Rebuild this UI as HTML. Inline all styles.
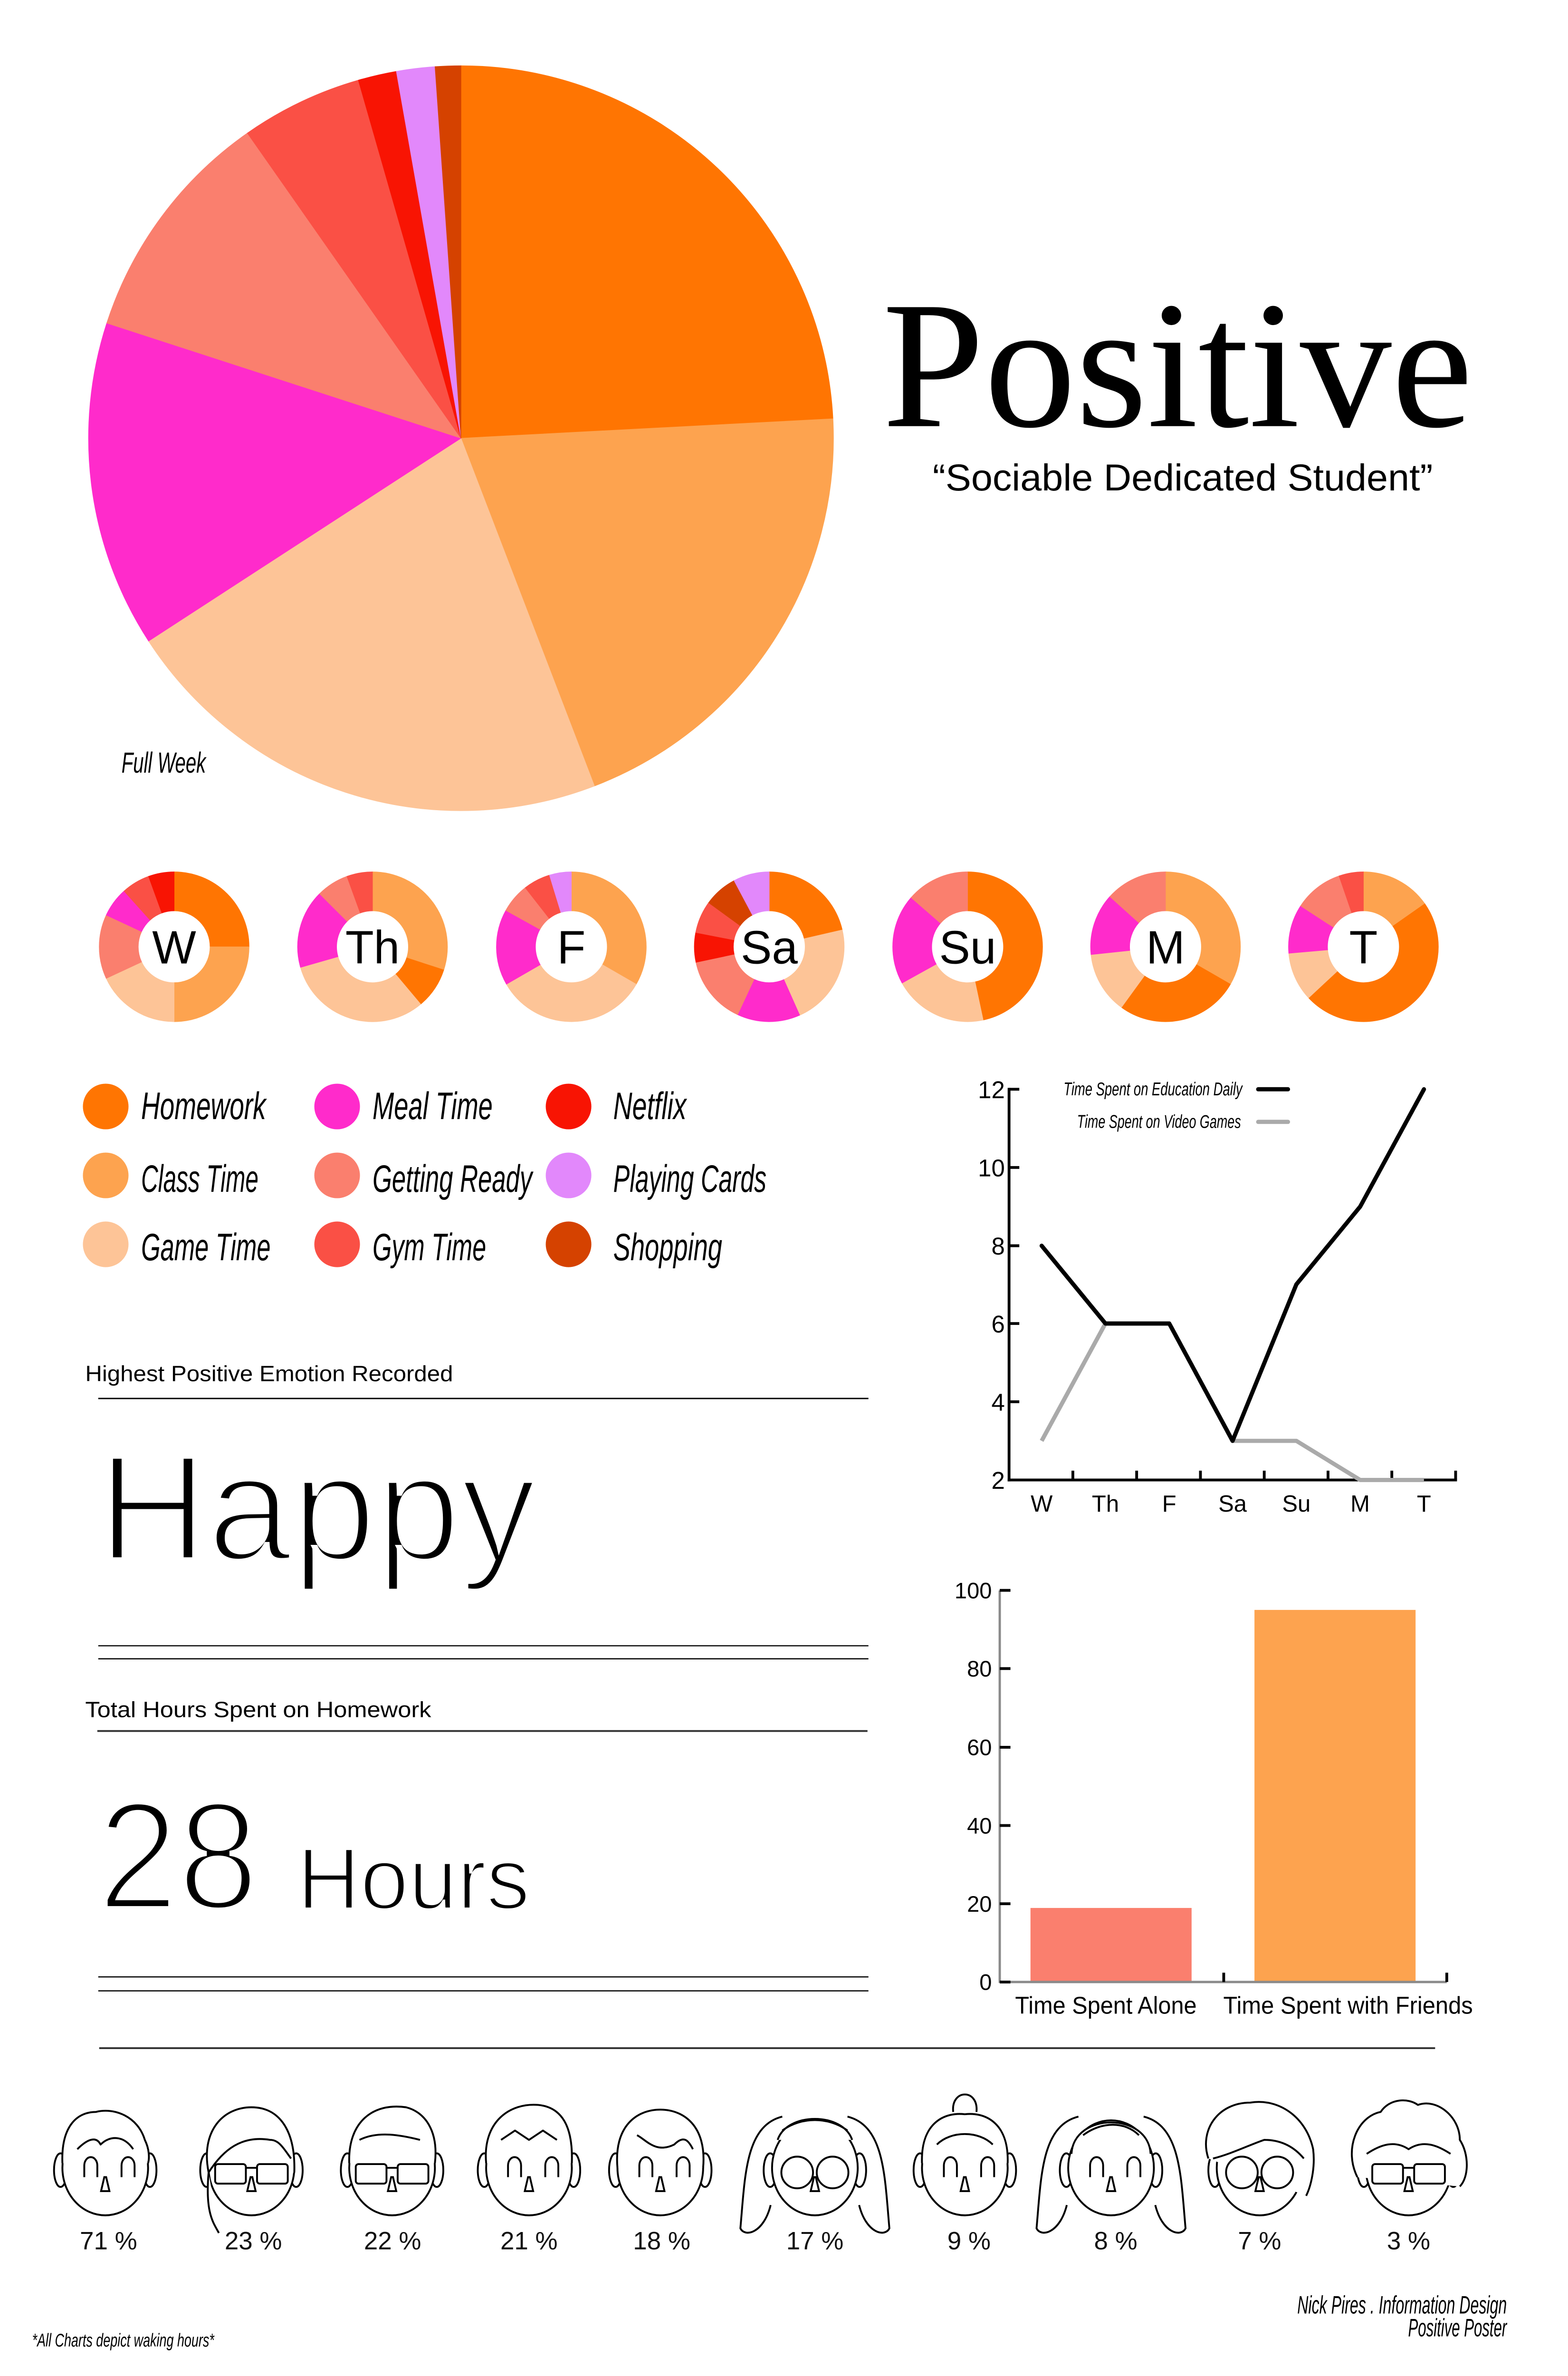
<!DOCTYPE html>
<html><head><meta charset="utf-8">
<style>
html,body{margin:0;padding:0;background:#fff;width:3300px;height:5100px;overflow:hidden;}
svg{display:block;}
.n{font-family:"Liberation Sans Narrow","Liberation Sans",sans-serif;font-style:italic;}
.s{font-family:"Liberation Sans",sans-serif;}
</style></head>
<body>
<svg id="main" xmlns="http://www.w3.org/2000/svg" width="3300" height="5100" viewBox="0 0 3300 5100">
<rect width="3300" height="5100" fill="#fff"/>
<g transform="scale(0.98)">
<g id="pies"></g>

<text x="1895" y="915" font-family="Liberation Serif, serif" font-size="390" textLength="1268" lengthAdjust="spacingAndGlyphs" fill="#000">Positive</text>
<text x="2003" y="1053" class="s" font-size="80" textLength="1074" lengthAdjust="spacingAndGlyphs" fill="#000">“Sociable Dedicated Student”</text>
<text x="261" y="1659" class="n" font-size="62" textLength="181" lengthAdjust="spacingAndGlyphs">Full Week</text>

<g class="s" font-size="100" text-anchor="middle" fill="#000">
<text x="374" y="2069">W</text><text x="800" y="2069">Th</text><text x="1227" y="2069">F</text><text x="1652" y="2069">Sa</text><text x="2078" y="2069">Su</text><text x="2503" y="2069">M</text><text x="2928" y="2069">T</text>
</g>

<g>
<circle cx="227" cy="2376" r="49" fill="#FF7502"/>
<circle cx="227" cy="2524" r="49" fill="#FDA34F"/>
<circle cx="227" cy="2672" r="49" fill="#FDC497"/>
<circle cx="724" cy="2376" r="49" fill="#FF2BCB"/>
<circle cx="724" cy="2524" r="49" fill="#FA7F6E"/>
<circle cx="724" cy="2672" r="49" fill="#FA5045"/>
<circle cx="1221" cy="2376" r="49" fill="#F81403"/>
<circle cx="1221" cy="2524" r="49" fill="#E288FB"/>
<circle cx="1221" cy="2672" r="49" fill="#D54200"/>
</g>
<g class="n" font-size="82">
<text x="303" y="2403" textLength="268" lengthAdjust="spacingAndGlyphs">Homework</text>
<text x="303" y="2559" textLength="252" lengthAdjust="spacingAndGlyphs">Class Time</text>
<text x="303" y="2706" textLength="278" lengthAdjust="spacingAndGlyphs">Game Time</text>
<text x="800" y="2403" textLength="258" lengthAdjust="spacingAndGlyphs">Meal Time</text>
<text x="800" y="2559" textLength="343" lengthAdjust="spacingAndGlyphs">Getting Ready</text>
<text x="800" y="2706" textLength="244" lengthAdjust="spacingAndGlyphs">Gym Time</text>
<text x="1317" y="2403" textLength="157" lengthAdjust="spacingAndGlyphs">Netflix</text>
<text x="1317" y="2559" textLength="329" lengthAdjust="spacingAndGlyphs">Playing Cards</text>
<text x="1317" y="2706" textLength="234" lengthAdjust="spacingAndGlyphs">Shopping</text>
</g>

<text x="183" y="2966" class="s" font-size="47" textLength="790" lengthAdjust="spacingAndGlyphs">Highest Positive Emotion Recorded</text>
<line x1="211" y1="3003" x2="1865" y2="3003" stroke="#000" stroke-width="3"/>
<text x="210" y="3350" class="s" font-size="325" textLength="942" lengthAdjust="spacingAndGlyphs" stroke="#fff" stroke-width="12">Happy</text>
<line x1="211" y1="3534" x2="1865" y2="3534" stroke="#000" stroke-width="2.5"/>
<line x1="211" y1="3562" x2="1865" y2="3562" stroke="#000" stroke-width="2.5"/>
<text x="183" y="3687" class="s" font-size="47" textLength="743" lengthAdjust="spacingAndGlyphs">Total Hours Spent on Homework</text>
<line x1="209" y1="3717" x2="1863" y2="3717" stroke="#333" stroke-width="4"/>
<text x="210" y="4099" class="s" font-size="330" textLength="345" lengthAdjust="spacingAndGlyphs" stroke="#fff" stroke-width="12">28</text>
<text x="638" y="4099" class="s" font-size="188" textLength="500" lengthAdjust="spacingAndGlyphs" stroke="#fff" stroke-width="6">Hours</text>
<line x1="211" y1="4245" x2="1865" y2="4245" stroke="#000" stroke-width="2.5"/>
<line x1="211" y1="4275" x2="1865" y2="4275" stroke="#000" stroke-width="2.5"/>

<g stroke="#000" stroke-width="6" fill="none">
<line x1="2167" y1="2336" x2="2167" y2="3181"/>
<line x1="2164" y1="3178" x2="3129" y2="3178"/>
<line x1="2167" y1="2339" x2="2189" y2="2339"/>
<line x1="2167" y1="2507" x2="2189" y2="2507"/>
<line x1="2167" y1="2675" x2="2189" y2="2675"/>
<line x1="2167" y1="2842" x2="2189" y2="2842"/>
<line x1="2167" y1="3010" x2="2189" y2="3010"/>
<line x1="2304" y1="3178" x2="2304" y2="3158"/>
<line x1="2441" y1="3178" x2="2441" y2="3158"/>
<line x1="2578" y1="3178" x2="2578" y2="3158"/>
<line x1="2715" y1="3178" x2="2715" y2="3158"/>
<line x1="2852" y1="3178" x2="2852" y2="3158"/>
<line x1="2989" y1="3178" x2="2989" y2="3158"/>
<line x1="3126" y1="3178" x2="3126" y2="3158"/>
</g>
<g class="s" font-size="52" text-anchor="end" fill="#000">
<text x="2158" y="2358">12</text><text x="2158" y="2526">10</text><text x="2158" y="2694">8</text><text x="2158" y="2861">6</text><text x="2158" y="3029">4</text><text x="2158" y="3197">2</text>
</g>
<g class="s" font-size="50" text-anchor="middle" fill="#000">
<text x="2237" y="3246">W</text><text x="2374" y="3246">Th</text><text x="2511" y="3246">F</text><text x="2647" y="3246">Sa</text><text x="2784" y="3246">Su</text><text x="2921" y="3246">M</text><text x="3058" y="3246">T</text>
</g>
<polyline fill="none" stroke="#aaa" stroke-width="9" stroke-linejoin="round" points="2237,3094 2374,2842 2511,2842 2647,3094 2784,3094 2921,3178 3058,3178"/>
<polyline fill="none" stroke="#000" stroke-width="9" stroke-linejoin="round" stroke-linecap="round" points="2237,2675 2374,2842 2511,2842 2647,3094 2784,2758 2921,2591 3058,2339"/>
<text x="2668" y="2352" class="n" font-size="40" text-anchor="end" textLength="384" lengthAdjust="spacingAndGlyphs">Time Spent on Education Daily</text>
<text x="2665" y="2422" class="n" font-size="40" text-anchor="end" textLength="352" lengthAdjust="spacingAndGlyphs">Time Spent on Video Games</text>
<line x1="2702" y1="2339" x2="2766" y2="2339" stroke="#000" stroke-width="9" stroke-linecap="round"/>
<line x1="2702" y1="2409" x2="2766" y2="2409" stroke="#aaa" stroke-width="9" stroke-linecap="round"/>

<rect x="2213" y="4097" width="346" height="159" fill="#FA7F6E"/>
<rect x="2694" y="3457" width="346" height="799" fill="#FDA34F"/>
<line x1="2147" y1="3415" x2="2147" y2="4258" stroke="#8a8a8a" stroke-width="5"/>
<line x1="2147" y1="4256" x2="3107" y2="4256" stroke="#8a8a8a" stroke-width="5"/>
<g stroke="#000" stroke-width="6">
<line x1="2147" y1="3415" x2="2170" y2="3415"/><line x1="2147" y1="3583" x2="2170" y2="3583"/><line x1="2147" y1="3752" x2="2170" y2="3752"/><line x1="2147" y1="3920" x2="2170" y2="3920"/><line x1="2147" y1="4088" x2="2170" y2="4088"/><line x1="2147" y1="4256" x2="2170" y2="4256"/>
<line x1="2628" y1="4256" x2="2628" y2="4236"/><line x1="3107" y1="4256" x2="3107" y2="4236"/>
</g>
<g class="s" font-size="48" text-anchor="end" fill="#000">
<text x="2130" y="3432">100</text><text x="2130" y="3600">80</text><text x="2130" y="3769">60</text><text x="2130" y="3937">40</text><text x="2130" y="4105">20</text><text x="2130" y="4273">0</text>
</g>
<text x="2180" y="4324" class="s" font-size="52" textLength="390" lengthAdjust="spacingAndGlyphs">Time Spent Alone</text>
<text x="2627" y="4324" class="s" font-size="52" textLength="536" lengthAdjust="spacingAndGlyphs">Time Spent with Friends</text>

<line x1="213" y1="4398" x2="3082" y2="4398" stroke="#333" stroke-width="4"/>

<g id="faces" fill="none" stroke="#000" stroke-width="4"></g>
<g class="s" font-size="54" text-anchor="middle" fill="#111">
<text x="233" y="4830">71 %</text><text x="544" y="4830">23 %</text><text x="843" y="4830">22 %</text><text x="1136" y="4830">21 %</text><text x="1421" y="4830">18 %</text><text x="1750" y="4830">17 %</text><text x="2081" y="4830">9 %</text><text x="2396" y="4830">8 %</text><text x="2705" y="4830">7 %</text><text x="3025" y="4830">3 %</text>
</g>

<text x="3236" y="4968" class="n" font-size="54" text-anchor="end" textLength="450" lengthAdjust="spacingAndGlyphs">Nick Pires . Information Design</text>
<text x="3236" y="5017" class="n" font-size="54" text-anchor="end" textLength="212" lengthAdjust="spacingAndGlyphs">Positive Poster</text>
<text x="69" y="5039" class="n" font-size="40" textLength="391" lengthAdjust="spacingAndGlyphs">*All Charts depict waking hours*</text>
</g>
</svg>
<script>
(function(){
var NS="http://www.w3.org/2000/svg";
var C={hw:"#FF7502",cl:"#FDA34F",gm:"#FDC497",ml:"#FF2BCB",gr:"#FA7F6E",gy:"#FA5045",nf:"#F81403",pc:"#E288FB",sh:"#D54200"};
function pt(cx,cy,r,a){var t=(a-90)*Math.PI/180;return [cx+r*Math.cos(t),cy+r*Math.sin(t)];}
function wedge(cx,cy,r,r0,a0,a1){
 var L=(a1-a0)>180?1:0,p0=pt(cx,cy,r,a0),p1=pt(cx,cy,r,a1);
 if(r0<=0)return "M"+cx+" "+cy+"L"+p0+"A"+r+" "+r+" 0 "+L+" 1 "+p1+"Z";
 var q0=pt(cx,cy,r0,a1),q1=pt(cx,cy,r0,a0);
 return "M"+p0+"A"+r+" "+r+" 0 "+L+" 1 "+p1+"L"+q0+"A"+r0+" "+r0+" 0 "+L+" 0 "+q1+"Z";}
var g=document.getElementById("pies");
function add(cx,cy,r,r0,d){for(var i=0;i<d.length;i++){var p=document.createElementNS(NS,"path");p.setAttribute("d",wedge(cx,cy,r,r0,d[i][1],d[i][2]));p.setAttribute("fill",C[d[i][0]]);p.setAttribute("stroke",C[d[i][0]]);p.setAttribute("stroke-width","1");g.appendChild(p);}}
add(990,941,800,0,[["hw",0,87],["cl",87,159],["gm",159,237],["ml",237,288],["gr",288,325],["gy",325,344],["nf",344,350],["pc",350,356],["sh",356,360]]);
var D=[
[374,[["hw",0,90],["cl",90,180],["gm",180,245],["gr",245,295],["ml",295,318],["gy",318,340],["nf",340,360]]],
[800,[["cl",0,108],["hw",108,140],["gm",140,254],["ml",254,315],["gr",315,340],["gy",340,360]]],
[1227,[["cl",0,120],["gm",120,240],["ml",240,299],["gr",299,322],["gy",322,343],["pc",343,360]]],
[1652,[["hw",0,77],["gm",77,156],["ml",156,205],["gr",205,258],["nf",258,281],["gy",281,306],["sh",306,332],["pc",332,360]]],
[2078,[["hw",0,168],["gm",168,241],["ml",241,311],["gr",311,360]]],
[2503,[["cl",0,120],["hw",120,216],["gm",216,264],["ml",264,312],["gr",312,360]]],
[2928,[["cl",0,55],["hw",55,227],["gm",227,265],["ml",265,303],["gr",303,341],["gy",341,360]]]];
D.forEach(function(d){add(d[0],2033,161,77,d[1]);});
var F=document.getElementById("faces");
function el(tag,attrs){var e=document.createElementNS(NS,tag);for(var k in attrs)e.setAttribute(k,attrs[k]);F.appendChild(e);return e;}
var faces=[[226,"short","eyes"],[540,"side","rect"],[842,"quiff","rect"],[1136,"quiff2","eyes"],[1418,"short2","box"],[1750,"long","round"],[2072,"bun","eyes"],[2386,"long2","eyes"],[2705,"messy","circle"],[3025,"curly","rect"]];
faces.forEach(function(f){
 var x=f[0],y=4655;
 var long=(f[1]=="long"||f[1]=="long2");
 if(long){el("path",{d:"M"+(x-70)+" "+(y-110)+"C"+(x-150)+" "+(y-90)+" "+(x-150)+" "+(y+20)+" "+(x-160)+" "+(y+130)+"C"+(x-150)+" "+(y+150)+" "+(x-110)+" "+(y+140)+" "+(x-95)+" "+(y+80)+"M"+(x+70)+" "+(y-110)+"C"+(x+150)+" "+(y-90)+" "+(x+150)+" "+(y+20)+" "+(x+160)+" "+(y+130)+"C"+(x+150)+" "+(y+150)+" "+(x+110)+" "+(y+140)+" "+(x+95)+" "+(y+80)});}
 el("ellipse",{cx:x-96,cy:y+5,rx:14,ry:36});
 el("ellipse",{cx:x+96,cy:y+5,rx:14,ry:36});
 el("ellipse",{cx:x,cy:y,rx:92,ry:102,fill:"#fff"});
 var hair={
  short:"M-92 -10 C-95 -90 -60 -120 -20 -120 C 20 -130 70 -110 85 -60 C 95 -40 95 -20 92 -10 M-60 -40 C-40 -60 -20 -70 -10 -50 C10 -70 40 -70 60 -40",
  side:"M-92 10 C-110 -80 -60 -130 0 -130 C60 -130 95 -80 92 10 M-92 10 C-60 -40 -20 -70 40 -60 C60 -60 70 -40 85 -20 M-92 10 C-100 100 -80 120 -70 140",
  quiff:"M-92 -10 C-95 -100 -40 -140 30 -130 C70 -120 100 -80 92 -10 M-70 -60 C-30 -80 20 -70 60 -60",
  quiff2:"M-92 -10 C-100 -100 -40 -140 20 -135 C70 -130 95 -90 92 -10 M-60 -60 L-30 -80 L0 -60 L30 -80 L60 -60",
  short2:"M-92 0 C-100 -90 -50 -125 0 -125 C50 -125 100 -90 92 0 M-50 -70 C-30 -60 -10 -30 30 -50 C50 -70 60 -60 70 -40",
  long:"M-80 -60 C-60 -120 60 -120 80 -60 M-70 -80 C-30 -110 30 -110 70 -80",
  bun:"M-92 -10 C-95 -100 -40 -120 0 -115 C40 -120 95 -100 92 -10 M-60 -50 C-30 -80 30 -80 60 -50 M-25 -120 C-30 -170 30 -170 25 -120",
  long2:"M-85 -30 C-80 -120 80 -120 85 -30 M-60 -70 C-20 -100 30 -100 60 -70",
  messy:"M-110 -20 C-130 -80 -90 -140 -20 -140 C40 -150 100 -110 115 -40 C120 0 110 40 100 60 M-100 -20 C-60 -30 -20 -50 10 -60 C40 -60 70 -50 95 -20",
  curly:"M-110 20 C-140 -40 -110 -110 -60 -120 C-40 -150 0 -150 20 -135 C60 -150 110 -110 110 -60 C130 -30 130 20 110 40 M-90 -30 C-60 -50 -30 -60 0 -40 C30 -60 60 -50 90 -30"
 }[f[1]];
 var d=hair.replace(/(-?\d+) (-?\d+)/g,function(m,a,b){return (x+ +a)+" "+(y+ +b);});
 el("path",{d:d,fill:"#fff","stroke-linejoin":"round"});
 if(f[2]=="eyes"||f[2]=="box"){
  [-45,35].forEach(function(o){el("path",{d:"M"+(x+o)+" "+(y+20)+"v-25a14 18 0 0 1 28 0v25"});});
 } else if(f[2]=="rect"){
  el("rect",{x:x-78,y:y-8,width:66,height:42,rx:6});el("rect",{x:x+12,y:y-8,width:66,height:42,rx:6});el("line",{x1:x-12,y1:y,x2:x+12,y2:y});
 } else if(f[2]=="round"||f[2]=="circle"){
  el("circle",{cx:x-38,cy:y+10,r:34});el("circle",{cx:x+38,cy:y+10,r:34});
 }
 el("path",{d:"M"+(x-9)+" "+(y+50)+"L"+(x+9)+" "+(y+50)+"L"+(x+2)+" "+(y+20)+"L"+(x-2)+" "+(y+20)+"Z"});
});
})();
</script>
</body></html>
